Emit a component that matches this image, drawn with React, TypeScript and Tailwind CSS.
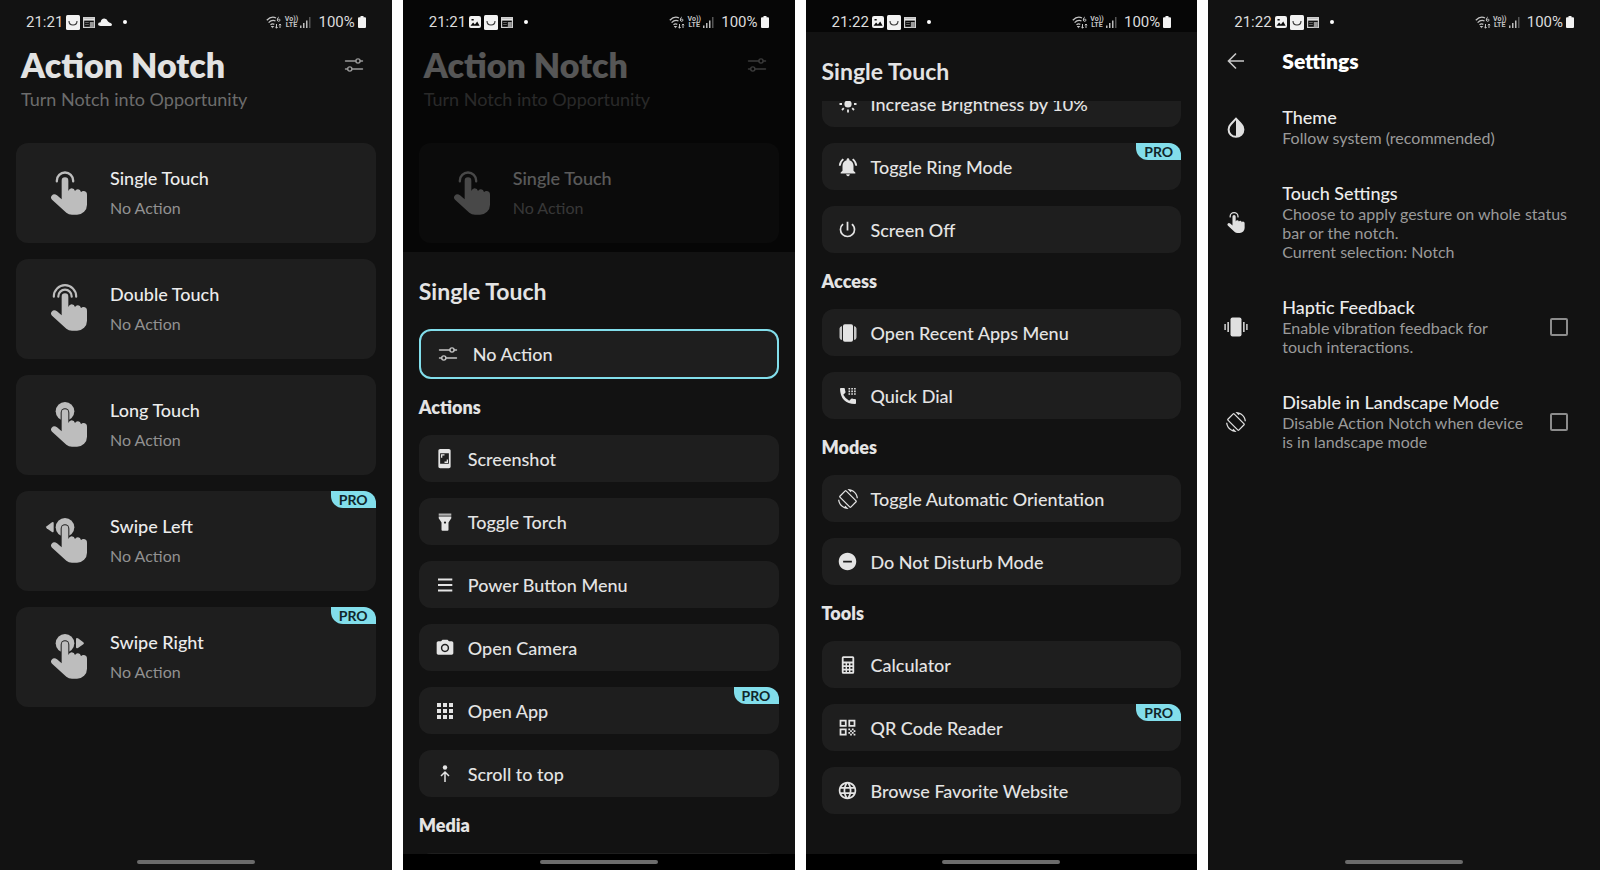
import type { ReactNode } from 'react';
import {
  MdApps,
  MdLanguage,
  MdNotificationsActive,
  MdPhotoCamera,
  MdPowerSettingsNew,
  MdQrCode,
  MdRemoveCircle,
  MdScreenRotation,
  MdScreenshot,
} from 'react-icons/md';

type Gesture = 'single' | 'double' | 'long' | 'left' | 'right';

const HAND =
  'M185 604V539a10 10 0 0 1 20 0v31q3-8 10-8 8 0 10 8 3-5 8-5 8 0 10 9 3-4 7-4 11 0 11 11v30a30 30 0 0 1-30 30h-15q-10 0-17-6l-42-38q-7-7-2-13 7-8 16-1l14 12z';

/* ---------- icons ---------- */

function GestureIcon({ type }: { type: Gesture }) {
  const filled = type === 'long' || type === 'left' || type === 'right';
  return (
    <svg width="50" height="52" viewBox="132 498 150 156" fill="#bdbdbd" className="shrink-0" aria-hidden="true">
      {type === 'single' && (
        <path d="M170.500 541v-2a24.500 24.500 0 0 1 49 0v2" fill="none" stroke="#bdbdbd" strokeWidth="7" strokeLinecap="round" />
      )}
      {type === 'double' && (
        <g fill="none" stroke="#bdbdbd" strokeWidth="6.500" strokeLinecap="round">
          <path d="M161.500 539v-1a33.500 33.500 0 0 1 67 0v1" />
          <path d="M175 539v-1a20 20 0 0 1 40 0v1" />
        </g>
      )}
      {filled && (
        <>
          <circle cx="195" cy="535" r="28" />
          <path d="M182 570V539a13 13 0 0 1 26 0v20l-3 11z" fill="#1e1e1e" />
        </>
      )}
      {type === 'left' && <path d="M140 532l16-12q5-3 5 3v23q0 6-5 3l-16-11q-4-3 0-6z" />}
      {type === 'right' && <path d="M250 532l-16-12q-6-3-6 3v23q0 6 6 3l16-11q4-3 0-6z" />}
      <path d={HAND} />
    </svg>
  );
}

function SlidersIcon({ color = '#9a9a9a' }: { color?: string }) {
  return (
    <svg width="20" height="16" viewBox="0 0 20 16" fill="none" stroke={color} strokeWidth="1.400" strokeLinecap="round">
      <path d="M1.500 4h10.300M16.200 4h2.300M1.500 12h2M8 12h10.500" />
      <circle cx="14" cy="4" r="2.100" />
      <circle cx="5.800" cy="12" r="2.100" />
    </svg>
  );
}

function TorchIcon() {
  return (
    <svg width="20" height="20" viewBox="0 0 20 20" fill="currentColor">
      <path d="M3.700 1.500h12.600v2.200H3.700z" opacity=".75" />
      <path d="M3.700 4.600h12.600v1.600l-2.800 4.300v7.200q0 1-1 1h-5q-1 0-1-1v-7.200L3.700 6.200z" />
      <circle cx="10" cy="10.600" r="1.100" fill="#1e1e1e" />
    </svg>
  );
}

function MenuIcon() {
  return (
    <svg width="20" height="20" viewBox="0 0 20 20" stroke="currentColor" strokeWidth="2">
      <path d="M3 4.500h14.300M3 10h14.300M3 15.500h14.300" />
    </svg>
  );
}

function ScrollTopIcon() {
  return (
    <svg width="20" height="20" viewBox="0 0 20 20" fill="none" stroke="currentColor" strokeWidth="1.500">
      <circle cx="10" cy="3.500" r="2.200" fill="currentColor" stroke="none" />
      <path d="M10 18V8M6 12l4-4 4 4" />
    </svg>
  );
}

function SunIcon() {
  return (
    <svg width="20" height="20" viewBox="0 0 20 20" stroke="currentColor" strokeWidth="1.800">
      <circle cx="10" cy="10" r="3.600" fill="currentColor" stroke="none" />
      <path d="M10 1.500v3M10 15.500v3M1.500 10h2.500M16 10h2.500M4 4l1.800 1.800M14.200 14.200L16 16M4 16l1.800-1.800M14.200 5.800L16 4" />
    </svg>
  );
}

function RecentIcon() {
  return (
    <svg width="20" height="20" viewBox="0 0 20 20" fill="currentColor">
      <rect x="5" y="1.200" width="10" height="17.600" rx="1.800" />
      <path d="M4 3v14Q1.500 16.500 1.500 14.500v-9Q1.500 3.500 4 3zM16 3v14q2.500-.5 2.500-2.500v-9Q18.500 3.500 16 3z" opacity=".85" />
    </svg>
  );
}

function DialIcon() {
  return (
    <svg width="20" height="20" viewBox="0 0 20 20" fill="currentColor">
      <path d="M2 2.900Q2 2 2.900 2H6q.8 0 .9.900.1 1.500.600 2.900.2.600-.2 1L5.300 8.800q2 3.900 5.900 5.900l2-2q.4-.4 1-.2 1.400.5 2.900.6.900.1.900.9v3.100q0 .9-.9.900Q2.500 17.500 2 2.900z" />
      <path d="M10.500 2h1.600v1.600h-1.600zM13.300 2h1.600v1.600h-1.600zM16.100 2h1.600v1.600h-1.600zM10.500 4.600h1.600v1.600h-1.600zM13.300 4.600h1.600v1.600h-1.600zM16.100 4.600h1.600v1.600h-1.600zM10.500 7.200h1.600v1.600h-1.600zM13.300 7.200h1.600v1.600h-1.600zM16.100 7.200h1.600v1.600h-1.600z" />
    </svg>
  );
}

function CalculatorIcon() {
  return (
    <svg width="20" height="20" viewBox="0 0 20 20" fill="currentColor" fillRule="evenodd">
      <path d="M5.300 1.200h9.400q1.500 0 1.500 1.500v14.600q0 1.500-1.500 1.500H5.300q-1.500 0-1.500-1.500V2.700q0-1.500 1.500-1.500zM5.600 3v3.600h8.800V3zM5.600 8.500v1.800h2V8.500zM9 8.500v1.800h2V8.500zM12.400 8.500v1.800h2V8.500zM5.600 12v1.800h2V12zM9 12v1.800h2V12zM12.400 12v1.800h2V12zM5.600 15.400v1.700h2v-1.700zM9 15.400v1.700h2v-1.700zM12.400 15.400v1.700h2v-1.700z" />
    </svg>
  );
}

function ThemeIcon() {
  return (
    <svg width="20" height="22" viewBox="0 0 20 22" fill="none">
      <path d="M10 2.600L4.800 8.200a7.400 7.400 0 1 0 10.400 0z" stroke="currentColor" strokeWidth="2" />
      <path d="M10 2.600l5.200 5.600A7.400 7.400 0 0 1 10 20.500z" fill="currentColor" />
    </svg>
  );
}

function SmallTouchIcon() {
  return (
    <svg width="24" height="25" viewBox="132 498 150 156" fill="currentColor">
      <path d="M170.500 541v-2a24.500 24.500 0 0 1 49 0v2" fill="none" stroke="currentColor" strokeWidth="8" strokeLinecap="round" />
      <path d={HAND} />
    </svg>
  );
}

function VibrateIcon() {
  return (
    <svg width="24" height="20" viewBox="0 0 24 20" fill="currentColor">
      <rect x="6.500" y="0.500" width="11" height="19" rx="2" />
      <path d="M3.400 5h1.500v10H3.400zM.4 7h1.400v6H.4zM19.100 5h1.500v10h-1.500zM22.200 7h1.400v6h-1.400z" />
    </svg>
  );
}

/* ---------- status bar ---------- */

function StatusIcon({ name }: { name: string }) {
  if (name === 'image') {
    return (
      <svg width="12" height="12" viewBox="0 0 12 12">
        <rect width="12" height="12" rx="2" fill="#f2f2f2" />
        <path d="M1.500 9.800l2.600-3.400 1.800 2 2.300-3 2.400 4.400zM2.500 3h2.200v1.500H2.500z" fill="#0a0a0a" />
      </svg>
    );
  }
  if (name === 'store') {
    return (
      <svg width="14" height="15" viewBox="0 0 14 15">
        <rect width="14" height="15" rx="1.500" fill="#f2f2f2" />
        <path d="M3 6q0 4 4 4t4-4" fill="none" stroke="#333" strokeWidth="1.100" />
      </svg>
    );
  }
  if (name === 'news') {
    return (
      <svg width="12" height="11" viewBox="0 0 12 11">
        <rect x=".6" y=".6" width="10.800" height="9.800" fill="none" stroke="#cfcfcf" strokeWidth="1.200" />
        <path d="M.6 1.200h10.800v2.400H.6z" fill="#e4e4e4" />
        <path d="M2.200 5.500h3.600M2.200 7.500h3.600" stroke="#777" strokeWidth=".8" />
        <path d="M6.800 5h4v5.400h-4z" fill="#999" />
      </svg>
    );
  }
  return (
    <svg width="14" height="8" viewBox="0 0 14 8" fill="#f2f2f2">
      <path d="M2.600 8Q0 8 0 6.200 0 4.400 2.600 4.200 3.200.6 6.300.6q2.500 0 3.700 2.800 1.300 1.300 2.600 1.600Q14 5.600 14 6.800 13.800 8 12.400 8z" />
    </svg>
  );
}

function StatusBar({ time, icons, className = '' }: { time: string; icons: string[]; className?: string }) {
  return (
    <div className={`flex h-8 shrink-0 items-center justify-between px-[26px] pt-3 font-['Roboto',sans-serif] text-[15px] text-[#dcdcdc] ${className}`}>
      <div className="flex items-center gap-[3px]">
        <span className="leading-5">{time}</span>
        {icons.map((name) => (
          <StatusIcon key={name} name={name} />
        ))}
        <span className="ml-2 size-1 rounded-full bg-white" />
      </div>
      <div className="flex items-center gap-[3px]">
        <svg width="16" height="13" viewBox="0 0 16 13" fill="none" stroke="#c4c4c4" strokeWidth="1.300">
          <path d="M.8 4.200Q5.500-.6 10 2M2.600 6.600Q6 3.200 9.500 5M4.500 8.800q1.700-1.500 3.800-.5" />
          <path d="M5.300 10.500l1.200 1.200 1.200-1.200zM10.500 8v4M9.300 11l1.200 1.200 1.200-1.200M14 12V8M12.800 9.200L14 8l1.200 1.200" strokeWidth="1" />
          <path d="M12.800 1q-1.800 1-1.500 3 .2 1.400 1.500 1.300 1.300-.2 1.200-1.400-.3-1-1.400-.8-1 .2-1.200 1" strokeWidth="1" />
        </svg>
        <span className="flex w-3 flex-col items-center text-[7px] leading-[6px] font-bold text-[#c4c4c4]">
          <span>Vo))</span>
          <span>LTE</span>
        </span>
        <svg width="11" height="11" viewBox="0 0 11 11">
          <path d="M0 8.500h1.500V11H0zM3 6h1.500v5H3zM6 3.500h1.500V11H6z" fill="#bbb" />
          <path d="M9 0h1.500v11H9z" fill="#555" />
        </svg>
        <span className="ml-1 leading-5">100%</span>
        <svg width="8" height="12" viewBox="0 0 8 12" fill="#f2f2f2">
          <path d="M2.500 0h3v1.200H7q1 0 1 1V11q0 1-1 1H1q-1 0-1-1V2.200q0-1 1-1h1.500z" />
        </svg>
      </div>
    </div>
  );
}

/* ---------- shared pieces ---------- */

function Phone({ children, footer = '' }: { children: ReactNode; footer?: string }) {
  return (
    <section className="flex min-w-0 flex-col overflow-hidden bg-[#121212]">
      {children}
      <div className={`flex h-4 shrink-0 items-center justify-center ${footer}`}>
        <span className="h-1 w-[118px] rounded-full bg-[#6b6b6b]" />
      </div>
    </section>
  );
}

function ProBadge() {
  return (
    <span className="absolute top-0 right-0 flex h-[17px] w-[45px] items-center justify-center rounded-tr-xl rounded-bl-xl bg-[#82deeb] text-sm font-bold text-[#10262a]">
      PRO
    </span>
  );
}

function HomeHeader() {
  return (
    <header className="flex items-start justify-between pt-[13px] pr-7 pl-[21px]">
      <div>
        <h1 className="text-[34px] leading-10 font-extrabold text-[#e2e2e2]">Action Notch</h1>
        <p className="mt-0.5 text-lg leading-6 text-[#6c6c6c]">Turn Notch into Opportunity</p>
      </div>
      <button type="button" aria-label="Settings" className="mt-3">
        <SlidersIcon />
      </button>
    </header>
  );
}

function GestureCard({ type, title, pro }: { type: Gesture; title: string; pro?: boolean }) {
  return (
    <button type="button" className="relative flex h-[100px] w-full items-center gap-4 rounded-xl bg-[#1e1e1e] pl-7 text-left">
      <GestureIcon type={type} />
      <span className="flex flex-col gap-0.5">
        <span className="text-lg leading-7 font-medium text-[#ececec]">{title}</span>
        <span className="text-base leading-7 text-[#919191]">No Action</span>
      </span>
      {pro && <ProBadge />}
    </button>
  );
}

function ActionRow({ icon, label, pro }: { icon: ReactNode; label: string; pro?: boolean }) {
  return (
    <button type="button" className="relative flex h-[47px] w-full shrink-0 items-center gap-3 rounded-xl bg-[#1e1e1e] pr-4 pl-[15px] text-left text-[#e4e4e4]">
      <span className="flex w-[22px] justify-center">{icon}</span>
      <span className="text-lg leading-6 font-medium">{label}</span>
      {pro && <ProBadge />}
    </button>
  );
}

function GroupTitle({ children }: { children: ReactNode }) {
  return <h3 className="text-lg leading-6 font-extrabold text-[#e4e4e4]">{children}</h3>;
}

function SheetTitle() {
  return <h2 className="px-4 pt-[23px] pb-3.5 text-[23px] leading-8 font-bold text-[#e4e4e4]">Single Touch</h2>;
}

function SettingRow({ icon, title, lines, checkbox }: { icon: ReactNode; title: string; lines: string[]; checkbox?: string }) {
  return (
    <div className="flex items-center">
      <span className="flex w-14 shrink-0 justify-center text-[#e0e0e0]">{icon}</span>
      <div className="ml-[18px] grow">
        <label htmlFor={checkbox} className="block text-lg leading-[21px] font-medium text-[#ececec]">
          {title}
        </label>
        {lines.map((line) => (
          <p key={line} className="text-base leading-[19px] text-[#9a9a9a]">
            {line}
          </p>
        ))}
      </div>
      {checkbox && (
        <input id={checkbox} type="checkbox" className="mr-8 size-[18px] shrink-0 appearance-none rounded-xs border-2 border-[#8c8c8c] checked:bg-[#82deeb]" />
      )}
    </div>
  );
}

/* ---------- screens ---------- */

function HomeScreen() {
  return (
    <Phone>
      <StatusBar time="21:21" icons={['store', 'news', 'cloud']} />
      <HomeHeader />
      <div className="mt-8 flex grow flex-col gap-4 px-4">
        <GestureCard type="single" title="Single Touch" />
        <GestureCard type="double" title="Double Touch" />
        <GestureCard type="long" title="Long Touch" />
        <GestureCard type="left" title="Swipe Left" pro />
        <GestureCard type="right" title="Swipe Right" pro />
      </div>
    </Phone>
  );
}

function ActionSheetScreen() {
  return (
    <Phone footer="bg-black">
      <StatusBar time="21:21" icons={['image', 'store', 'news']} className="bg-[#060606]" />
      <div className="relative shrink-0 pb-[9px]">
        <HomeHeader />
        <div className="mt-8 px-4">
          <GestureCard type="single" title="Single Touch" />
        </div>
        <div className="absolute inset-0 bg-black/62" />
      </div>
      <SheetTitle />
      <div className="flex min-h-0 flex-1 flex-col gap-4 overflow-hidden px-4 pt-2">
        <button type="button" className="flex h-[50px] w-full shrink-0 items-center gap-3.5 rounded-xl border-2 border-[#82deeb] bg-[#1e1e1e] px-4 text-left text-[#e4e4e4]">
          <span className="flex w-[22px] justify-center">
            <SlidersIcon color="#c4c4c4" />
          </span>
          <span className="text-lg leading-6 font-medium">No Action</span>
        </button>
        <GroupTitle>Actions</GroupTitle>
        <ActionRow icon={<MdScreenshot size={21} />} label="Screenshot" />
        <ActionRow icon={<TorchIcon />} label="Toggle Torch" />
        <ActionRow icon={<MenuIcon />} label="Power Button Menu" />
        <ActionRow icon={<MdPhotoCamera size={20} />} label="Open Camera" />
        <ActionRow icon={<MdApps size={24} className="shrink-0" />} label="Open App" pro />
        <ActionRow icon={<ScrollTopIcon />} label="Scroll to top" />
        <GroupTitle>Media</GroupTitle>
        <div className="h-[47px] shrink-0 rounded-xl bg-[#1e1e1e]" />
      </div>
    </Phone>
  );
}

function ActionListScreen() {
  return (
    <Phone footer="bg-black">
      <StatusBar time="21:22" icons={['image', 'store', 'news']} className="bg-[#060606]" />
      <SheetTitle />
      <div className="min-h-0 flex-1 overflow-hidden px-4">
        {/* list is scrolled part of the way down */}
        <div className="-mt-[21px] flex flex-col gap-4">
          <ActionRow icon={<SunIcon />} label="Increase Brightness by 10%" />
          <ActionRow icon={<MdNotificationsActive size={22} />} label="Toggle Ring Mode" pro />
          <ActionRow icon={<MdPowerSettingsNew size={21} />} label="Screen Off" />
          <GroupTitle>Access</GroupTitle>
          <ActionRow icon={<RecentIcon />} label="Open Recent Apps Menu" />
          <ActionRow icon={<DialIcon />} label="Quick Dial" />
          <GroupTitle>Modes</GroupTitle>
          <ActionRow icon={<MdScreenRotation size={20} />} label="Toggle Automatic Orientation" />
          <ActionRow icon={<MdRemoveCircle size={21} />} label="Do Not Disturb Mode" />
          <GroupTitle>Tools</GroupTitle>
          <ActionRow icon={<CalculatorIcon />} label="Calculator" />
          <ActionRow icon={<MdQrCode size={21} />} label="QR Code Reader" pro />
          <ActionRow icon={<MdLanguage size={21} />} label="Browse Favorite Website" />
        </div>
      </div>
    </Phone>
  );
}

function SettingsScreen() {
  return (
    <Phone>
      <StatusBar time="21:22" icons={['image', 'store', 'news']} />
      <header className="flex items-center pt-[13px]">
        <button type="button" aria-label="Back" className="flex w-14 justify-center text-[#c8c8c8]">
          <svg width="18" height="18" viewBox="0 0 18 18" fill="none" stroke="currentColor" strokeWidth="1.600">
            <path d="M17 9H2M9 1.500L1.500 9 9 16.500" />
          </svg>
        </button>
        <h1 className="ml-[18px] text-[21px] leading-8 font-extrabold text-white">Settings</h1>
      </header>
      <div className="mt-[30px] flex grow flex-col gap-9">
        <SettingRow icon={<ThemeIcon />} title="Theme" lines={['Follow system (recommended)']} />
        <SettingRow
          icon={<SmallTouchIcon />}
          title="Touch Settings"
          lines={['Choose to apply gesture on whole status', 'bar or the notch.', 'Current selection: Notch']}
        />
        <SettingRow
          icon={<VibrateIcon />}
          title="Haptic Feedback"
          lines={['Enable vibration feedback for', 'touch interactions.']}
          checkbox="haptic"
        />
        <SettingRow
          icon={<MdScreenRotation size={20} />}
          title="Disable in Landscape Mode"
          lines={['Disable Action Notch when device', 'is in landscape mode']}
          checkbox="landscape"
        />
      </div>
    </Phone>
  );
}

export default function App() {
  return (
    <main className="grid h-screen grid-cols-4 gap-[11px] bg-white font-['Lato','Open_Sans',sans-serif]">
      <HomeScreen />
      <ActionSheetScreen />
      <ActionListScreen />
      <SettingsScreen />
    </main>
  );
}
